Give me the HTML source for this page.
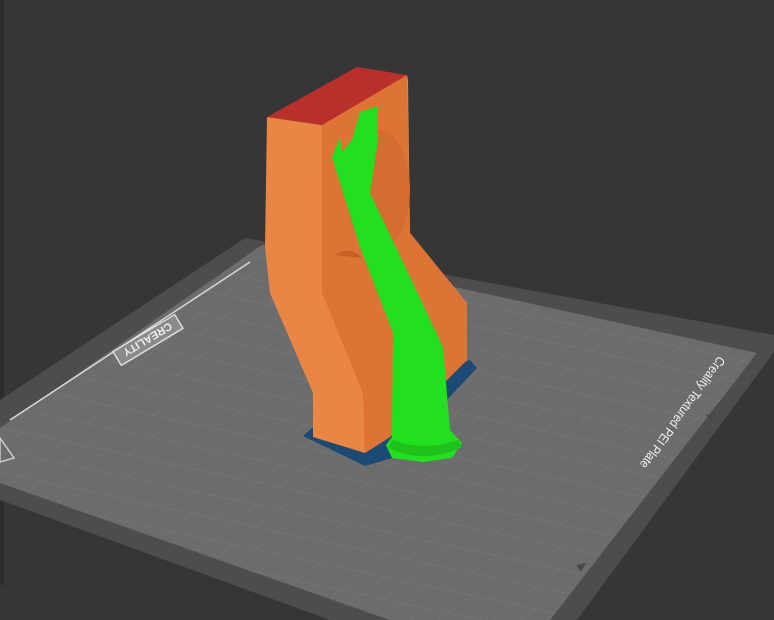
<!DOCTYPE html>
<html><head><style>
html,body{margin:0;padding:0;background:#363636;width:774px;height:620px;overflow:hidden;font-family:"Liberation Sans",sans-serif}
</style></head><body>
<svg width="774" height="620" viewBox="0 0 774 620" xmlns="http://www.w3.org/2000/svg">
<defs>
<pattern id="g" width="22" height="22" patternUnits="userSpaceOnUse" patternTransform="rotate(12) skewX(-40)">
<rect width="22" height="22" fill="#6c6c6c"/>
<path d="M0 0H22M0 0V22" stroke="#7a7a7a" stroke-width="1"/>
</pattern>
</defs>
<rect width="774" height="620" fill="#363636"/>
<rect x="0" y="0" width="4" height="585" fill="#2c2c2c"/>
<!-- rim -->
<polygon points="245,238 774,335 774,352 577,620 330,620 0,500 0,400" fill="#4d4d4d"/>
<!-- grid -->
<polygon points="262,245 757,353 550,620 390,620 0,483 0,428" fill="url(#g)"/>
<polyline points="250,262 10,420" stroke="#d8d8d8" stroke-width="1.5" fill="none"/>
<polygon points="0,438 14,458 0,462" fill="none" stroke="#ccc" stroke-width="1.5"/>
<polygon points="706,415 717,413 712,422" fill="#4a4a4a"/>
<polygon points="576,565 586,563 581,572" fill="#4a4a4a"/>
<!-- CREALITY label -->
<g transform="translate(148,340) rotate(149)">
<rect x="-36" y="-8" width="72" height="16" fill="#8a8a8a" stroke="#ddd" stroke-width="1.5"/>
<text x="0" y="4.5" font-size="11" fill="#eee" text-anchor="middle" font-weight="bold">CREALITY</text>
</g>
<text transform="translate(679,410) rotate(126)" font-size="13" fill="#f2f2f2" text-anchor="middle" textLength="135" lengthAdjust="spacingAndGlyphs">Creality Textured PEI Plate</text>
<!-- blue base -->
<polygon points="303,436 312,428 470,360 477,368 392,458 365,466" fill="#1c4a74"/>
<!-- orange body -->
<polygon points="267,117 265,247 270,293 313,393 313,437 365,453 390,437 467,360 467,303 410,233 408,80 407,75 322,125" fill="#ea8644"/>
<polygon points="322,125 407,75 410,233 467,303 467,360 390,437 365,453 363,393 322,293" fill="#dd7436"/>
<ellipse cx="378" cy="190" rx="32" ry="60" fill="#d56c30"/>
<path d="M335 255 Q350 245 362 258 Z" fill="#c66226"/>
<!-- red top -->
<polygon points="267,117 357,67 407,75 322,125" fill="#b8302c"/>
<!-- green tube -->
<path d="M332,157 L340,137 L342,152 L352,140 L360,112 L378,106 L378,140 L370,193 L410,277 L443,347 L450,430 L462,443 L452,458 L423,462 L392,458 L386,445 L392,437 L393,333 L360,247 Z" fill="#22e01f"/>
<path d="M392,440 Q425,452 458,440 L462,447 Q425,465 388,448 Z" fill="#1fc21c"/>
</svg>
</body></html>
